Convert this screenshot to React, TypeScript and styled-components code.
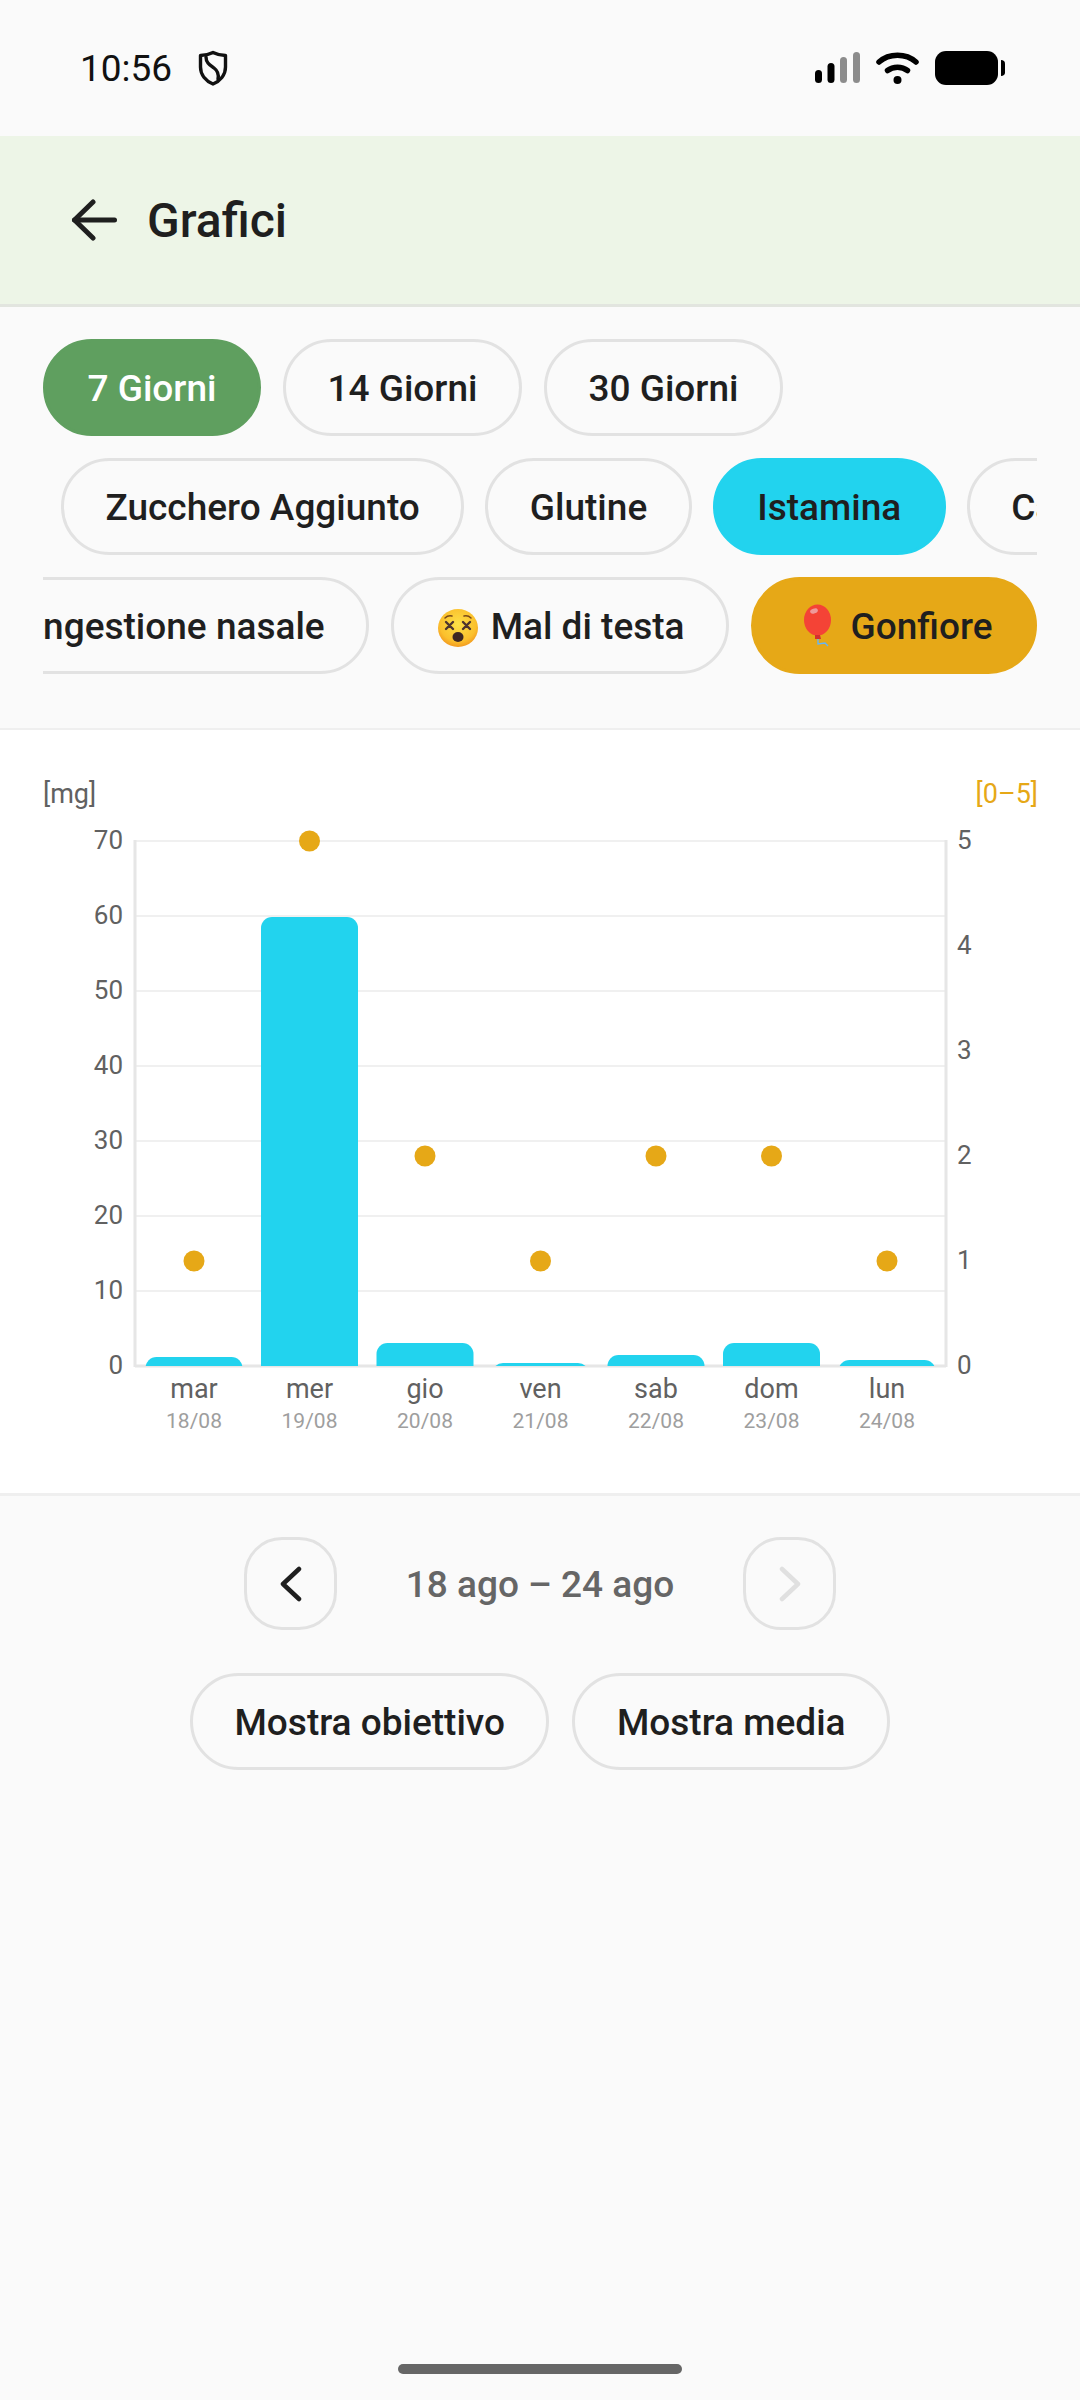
import React from 'react';
import styled, { createGlobalStyle } from 'styled-components';

const GlobalStyle = createGlobalStyle`
  html, body {
    margin: 0;
    padding: 0;
    background: #fafafa;
  }
  * {
    box-sizing: border-box;
  }
`;

const Screen = styled.div`
  position: relative;
  width: 1080px;
  height: 2400px;
  overflow: hidden;
  background: #fafafa;
  font-family: Roboto, "Liberation Sans", sans-serif;
  color: #1f1f1f;
`;

const StatusBar = styled.div`
  height: 136px;
  display: flex;
  align-items: center;
  justify-content: space-between;
  padding: 0 75px 0 80px;
`;

const StatusLeft = styled.div`
  display: flex;
  align-items: center;
  gap: 26px;
`;

const StatusRight = styled.div`
  display: flex;
  align-items: center;
  gap: 16px;
`;

const Clock = styled.span`
  font-size: 37px;
  color: #111;
`;

const Header = styled.header`
  height: 171px;
  display: flex;
  align-items: center;
  gap: 30px;
  padding-left: 71px;
  background: #edf5e7;
  border-bottom: 3px solid #e2e5df;
`;

const Title = styled.h1`
  margin: 0;
  font-size: 48px;
  font-weight: 500;
  color: #1f1f1f;
`;

const Filters = styled.section`
  height: 423px;
  padding: 32px 43px 0;
  display: flex;
  flex-direction: column;
  gap: 22px;
  border-bottom: 2px solid #efefef;
`;

const ChipRow = styled.div<{ $align?: string; $offset?: number; $gap?: number }>`
  display: flex;
  gap: ${({ $gap }) => $gap || 22}px;
  overflow: hidden;
  justify-content: ${({ $align }) => $align || 'flex-start'};
  padding-left: ${({ $offset }) => $offset || 0}px;
`;

const Chip = styled.button<{ $fill?: string; $light?: boolean }>`
  flex-shrink: 0;
  height: 97px;
  padding: 2px 41.5px 0;
  display: flex;
  align-items: center;
  gap: 11px;
  border-radius: 48.5px;
  border: 3px solid ${({ $fill }) => $fill || '#e2e2e2'};
  background: ${({ $fill }) => $fill || 'transparent'};
  color: ${({ $light }) => ($light ? '#ffffff' : '#1f1f1f')};
  font-family: inherit;
  font-size: 37px;
  font-weight: 500;
  white-space: nowrap;
`;

const ChartCard = styled.section`
  height: 766px;
  background: #ffffff;
  border-bottom: 3px solid #efefef;
`;

const ChartSvg = styled.svg`
  display: block;
`;

const AxisText = styled.text`
  font-family: Roboto, "Liberation Sans", sans-serif;
  font-size: 26px;
  fill: #616161;
`;

const DayText = styled(AxisText)`
  font-size: 27px;
`;

const UnitText = styled(AxisText)<{ $amber?: boolean }>`
  font-size: 27px;
  fill: ${({ $amber }) => ($amber ? '#e6a817' : '#616161')};
`;

const DateText = styled(AxisText)`
  font-size: 21px;
  fill: #9e9e9e;
`;

const PeriodNav = styled.div`
  margin-top: 41px;
  display: flex;
  justify-content: center;
  align-items: center;
  gap: 68px;
`;

const NavButton = styled.button`
  width: 93px;
  height: 93px;
  padding: 0;
  display: flex;
  align-items: center;
  justify-content: center;
  border-radius: 38px;
  border: 3px solid #e2e2e2;
  background: transparent;
`;

const PeriodLabel = styled.span`
  width: 270px;
  padding-top: 2px;
  text-align: center;
  font-size: 37px;
  font-weight: 500;
  color: #666666;
  white-space: nowrap;
`;

const Toggles = styled.div`
  margin-top: 43px;
  display: flex;
  justify-content: center;
  gap: 23px;
`;

const HomeBar = styled.div`
  position: absolute;
  left: 398px;
  bottom: 26px;
  width: 284px;
  height: 10px;
  border-radius: 5px;
  background: #666666;
`;

const yTicks = [0, 10, 20, 30, 40, 50, 60, 70];
const rightTicks = [0, 1, 2, 3, 4, 5];

const days = [
  { name: 'mar', date: '18/08', top: 1357, score: 1 },
  { name: 'mer', date: '19/08', top: 917, score: 5 },
  { name: 'gio', date: '20/08', top: 1343, score: 2 },
  { name: 'ven', date: '21/08', top: 1363, score: 1 },
  { name: 'sab', date: '22/08', top: 1355, score: 2 },
  { name: 'dom', date: '23/08', top: 1343, score: 2 },
  { name: 'lun', date: '24/08', top: 1360, score: 1 },
];

// chart coordinates are relative to the top of the card (y = 730 on the page)
const CARD_TOP = 730;
const PLOT_LEFT = 135;
const PLOT_RIGHT = 946;
const PLOT_BOTTOM = 1366 - CARD_TOP;
const PLOT_TOP = 841 - CARD_TOP;
const FIRST_X = 194;
const STEP = 115.5;

const Chart = () => (
  <ChartSvg width={1080} height={763} viewBox="0 0 1080 763">
    <defs>
      <clipPath id="plot-clip">
        <rect x={PLOT_LEFT} y={PLOT_TOP - 20} width={PLOT_RIGHT - PLOT_LEFT} height={PLOT_BOTTOM - PLOT_TOP + 20} />
      </clipPath>
    </defs>

    <UnitText x={43} y={73}>[mg]</UnitText>
    <UnitText x={1038} y={73} textAnchor="end" $amber>[0–5]</UnitText>

    {yTicks.map((t) => {
      const y = PLOT_BOTTOM - t * 7.5;
      return (
        <g key={t}>
          {t > 0 && <line x1={PLOT_LEFT} x2={PLOT_RIGHT} y1={y} y2={y} stroke="#f0f0f0" strokeWidth={2} />}
          <AxisText x={123} y={y + 8} textAnchor="end">{t}</AxisText>
        </g>
      );
    })}
    <line x1={PLOT_LEFT} x2={PLOT_LEFT} y1={PLOT_TOP - 1} y2={PLOT_BOTTOM + 1} stroke="#e6e6e6" strokeWidth={3} />
    <line x1={PLOT_RIGHT} x2={PLOT_RIGHT} y1={PLOT_TOP - 1} y2={PLOT_BOTTOM + 1} stroke="#e6e6e6" strokeWidth={3} />
    <line x1={PLOT_LEFT} x2={PLOT_RIGHT} y1={PLOT_BOTTOM} y2={PLOT_BOTTOM} stroke="#e6e6e6" strokeWidth={3} />

    {rightTicks.map((t) => (
      <AxisText key={t} x={957} y={PLOT_BOTTOM - t * 105 + 8}>{t}</AxisText>
    ))}

    {days.map((d, i) => {
      const cx = FIRST_X + STEP * i;
      return (
        <g key={d.name}>
          <g clipPath="url(#plot-clip)">
            <rect x={cx - 48.5} y={d.top - CARD_TOP} width={97} height={PLOT_BOTTOM - d.top + CARD_TOP + 20} rx={11} fill="#22d3ee" />
          </g>
          <circle cx={cx} cy={PLOT_BOTTOM - d.score * 105} r={10.5} fill="#e6a817" />
          <DayText x={cx} y={668} textAnchor="middle">{d.name}</DayText>
          <DateText x={cx} y={698} textAnchor="middle">{d.date}</DateText>
        </g>
      );
    })}
  </ChartSvg>
);

const ShieldIcon = () => (
  <svg width="30" height="36" viewBox="0 0 30 36" fill="none" stroke="#111" strokeWidth="3.4" strokeLinejoin="round" strokeLinecap="round">
    <path d="M15 2.5 C19 4.5 23 5.5 27.5 5.5 V17 C27.5 25 22 31 15 34 C8 31 2.5 25 2.5 17 V5.5 C7 5.5 11 4.5 15 2.5 Z" />
    <path d="M8 7 C8 13 12 15 16 18 C20 21 21 24 20 29" />
  </svg>
);

const SignalIcon = () => (
  <svg width="45" height="34" viewBox="0 0 45 34">
    <rect x="0" y="19" width="7" height="13" rx="3.5" fill="#000" />
    <rect x="12.5" y="12" width="7" height="20" rx="3.5" fill="#000" />
    <rect x="25" y="6" width="7" height="26" rx="3.5" fill="#8c8c8c" />
    <rect x="38" y="1" width="7" height="31" rx="3.5" fill="#8c8c8c" />
  </svg>
);

const WifiIcon = () => (
  <svg width="43" height="34" viewBox="0 0 43 34" fill="none" stroke="#000" strokeWidth="5.5" strokeLinecap="round">
    <path d="M3 11 C13 2 30 2 40 11" />
    <path d="M11.5 19.5 C17 15 26 15 31.5 19.5" />
    <circle cx="21.5" cy="29" r="4" fill="#000" stroke="none" />
  </svg>
);

const BatteryIcon = () => (
  <svg width="70" height="36" viewBox="0 0 70 36">
    <rect x="0" y="1" width="63" height="34" rx="11" fill="#000" />
    <path d="M66 10 C68.5 10 70 11.5 70 13.5 V22.5 C70 24.5 68.5 26 66 26 Z" fill="#000" />
  </svg>
);

const BackIcon = () => (
  <svg width="46" height="42" viewBox="0 0 46 42" fill="none" stroke="#1f1f1f" strokeWidth="5" strokeLinecap="round" strokeLinejoin="round">
    <path d="M43.5 21 H3.5" />
    <path d="M22 3 L3.5 21 L22 39" />
  </svg>
);

const Chevron = ({ flip, color }: { flip?: boolean; color: string }) => (
  <svg width="22" height="36" viewBox="0 0 22 36" fill="none" stroke={color} strokeWidth="4.5" strokeLinecap="round" strokeLinejoin="round">
    <path d={flip ? 'M3 3 L19 18 L3 33' : 'M19 3 L3 18 L19 33'} />
  </svg>
);

const DizzyFace = () => (
  <svg width="44" height="44" viewBox="0 0 44 44">
    <defs>
      <radialGradient id="face-fill" cx="50%" cy="40%" r="60%">
        <stop offset="0%" stopColor="#fde047" />
        <stop offset="75%" stopColor="#fbc02d" />
        <stop offset="100%" stopColor="#f29a1f" />
      </radialGradient>
    </defs>
    <ellipse cx="22" cy="23" rx="20" ry="19" fill="url(#face-fill)" />
    <path d="M9 13 Q12 10 16 11 M28 11 Q32 10 35 13" stroke="#7a4a1a" strokeWidth="1.5" fill="none" strokeLinecap="round" />
    <path d="M10 17 L17 24 M17 17 L10 24 M27 17 L34 24 M34 17 L27 24" stroke="#4e342e" strokeWidth="2.4" strokeLinecap="round" />
    <ellipse cx="22" cy="32" rx="5.5" ry="5" fill="#3e2723" />
  </svg>
);

const Balloon = () => (
  <svg width="44" height="46" viewBox="0 0 44 46">
    <ellipse cx="21.5" cy="16" rx="13.5" ry="15.5" fill="#f44336" />
    <path d="M19 31 L24 31 L25 35 L19 35 Z" fill="#d32f2f" />
    <ellipse cx="18" cy="7" rx="4" ry="2.5" fill="#ef9a9a" transform="rotate(-20 18 7)" />
    <path d="M22 35 L22 40 L29 39 L32 42" stroke="#64b5f6" strokeWidth="1.4" fill="none" />
  </svg>
);

const App = () => (
  <Screen>
    <GlobalStyle />
    <StatusBar>
      <StatusLeft>
        <Clock>10:56</Clock>
        <ShieldIcon />
      </StatusLeft>
      <StatusRight>
        <SignalIcon />
        <WifiIcon />
        <BatteryIcon />
      </StatusRight>
    </StatusBar>

    <Header>
      <BackIcon />
      <Title>Grafici</Title>
    </Header>

    <Filters>
      <ChipRow>
        <Chip $fill="#5f9f5f" $light>7 Giorni</Chip>
        <Chip>14 Giorni</Chip>
        <Chip>30 Giorni</Chip>
      </ChipRow>
      <ChipRow $offset={18} $gap={21}>
        <Chip>Zucchero Aggiunto</Chip>
        <Chip>Glutine</Chip>
        <Chip $fill="#22d3ee">Istamina</Chip>
        <Chip>Caffeina</Chip>
      </ChipRow>
      <ChipRow $align="flex-end">
        <Chip>Congestione nasale</Chip>
        <Chip><DizzyFace />Mal di testa</Chip>
        <Chip $fill="#e6a817"><Balloon />Gonfiore</Chip>
      </ChipRow>
    </Filters>

    <ChartCard>
      <Chart />
    </ChartCard>

    <PeriodNav>
      <NavButton><Chevron color="#1f1f1f" /></NavButton>
      <PeriodLabel>18 ago – 24 ago</PeriodLabel>
      <NavButton><Chevron flip color="#e0e0e0" /></NavButton>
    </PeriodNav>

    <Toggles>
      <Chip>Mostra obiettivo</Chip>
      <Chip>Mostra media</Chip>
    </Toggles>

    <HomeBar />
  </Screen>
);

export default App;
